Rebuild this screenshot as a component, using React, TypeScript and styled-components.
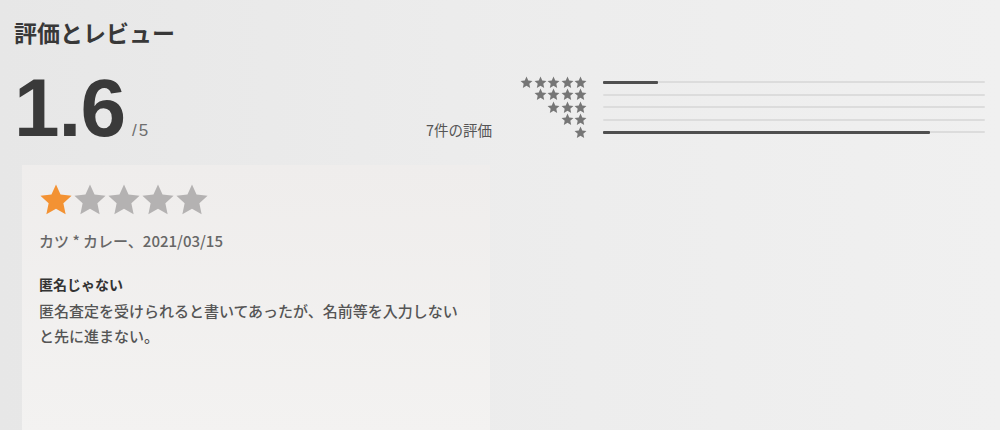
import React from 'react';
import styled, { createGlobalStyle } from 'styled-components';

const GlobalStyle = createGlobalStyle`
    html, body {
        margin: 0;
        padding: 0;
    }
    body {
        width: 1000px;
        height: 430px;
        overflow: hidden;
        background: linear-gradient(90deg, #e7e7e7 0%, #ececec 45%, #f0f0f0 100%);
        font-family: "Noto Sans CJK JP", "Noto Sans", sans-serif;
    }
`

const Page = styled.div`
    padding: 18px 0 0 14px;
    box-sizing: border-box;
    height: 430px;
`

const Heading = styled.h2`
    margin: 0;
    font-size: 23px;
    line-height: 28px;
    font-weight: 700;
    color: #383838;
`

const Summary = styled.div`
    display: flex;
    align-items: flex-start;
    margin-top: 21px;
`

const ScoreBlock = styled.div`
    display: flex;
    align-items: baseline;
    justify-content: space-between;
    width: 478px;
`

const Score = styled.div`
    display: flex;
    align-items: baseline;
    gap: 7px;
`

const BigNumber = styled.span`
    font-family: "Liberation Sans", Arial, sans-serif;
    font-weight: 700;
    font-size: 82px;
    line-height: 82px;
    letter-spacing: -1px;
    color: #3a3a3a;
`

const OutOf = styled.span`
    font-family: "Liberation Sans", Arial, sans-serif;
    font-size: 17px;
    letter-spacing: 2px;
    color: #6e6e6e;
`

const Count = styled.span`
    font-size: 14.5px;
    color: #555;
`

const Histogram = styled.div`
    display: grid;
    grid-template-columns: 67px 382px;
    column-gap: 16px;
    grid-auto-rows: 12.5px;
    align-items: center;
    margin: 9px 0 0 28px;
`

const MiniStars = styled.div`
    display: flex;
    justify-content: flex-end;
    gap: 0.5px;
`

const Track = styled.div`
    height: 2px;
    background: #dcdcdc;
    border-radius: 1px;
`

const Fill = styled.div`
    height: 2.5px;
    margin-top: -0.25px;
    background: #4f4f4f;
    border-radius: 1px;
`

const Card = styled.div`
    margin: 16px 0 0 8px;
    width: 468px;
    height: 270px;
    box-sizing: border-box;
    padding: 18px 0 0 17px;
    background: linear-gradient(180deg, #efedec 0%, #f3f2f1 100%);
`

const StarRow = styled.div`
    display: flex;
    gap: 0;
`

const Meta = styled.div`
    margin-top: 14px;
    font-size: 15px;
    line-height: 20px;
    font-weight: 500;
    color: #666;
`

const ReviewTitle = styled.div`
    margin-top: 23px;
    font-size: 14px;
    line-height: 20px;
    font-weight: 700;
    color: #333;
`

const ReviewBody = styled.p`
    margin: 4px 0 0;
    max-width: 432px;
    font-size: 15px;
    line-height: 25px;
    font-weight: 500;
    color: #555;
`

type StarProps = {
    size: number;
    color: string;
}

const Star: React.FC<StarProps> = ({ size, color }) => (
    <svg width={size} height={size} viewBox="0 0 24 24">
        <polygon
            fill={color}
            points="12,1 15.2,8.1 23,9 17.2,14.3 18.8,22 12,18.1 5.2,22 6.8,14.3 1,9 8.8,8.1"
        />
    </svg>
)

const distribution = [
    { stars: 5, ratio: 1 / 7 },
    { stars: 4, ratio: 0 },
    { stars: 3, ratio: 0 },
    { stars: 2, ratio: 0 },
    { stars: 1, ratio: 6 / 7 },
]

const App: React.FC = () => {
    return (
        <Page>
            <GlobalStyle />
            <Heading>評価とレビュー</Heading>
            <Summary>
                <ScoreBlock>
                    <Score>
                        <BigNumber>1.6</BigNumber>
                        <OutOf>/5</OutOf>
                    </Score>
                    <Count>7件の評価</Count>
                </ScoreBlock>
                <Histogram>
                    {distribution.map(row => (
                        <React.Fragment key={row.stars}>
                            <MiniStars>
                                {Array.from({ length: row.stars }).map((_, i) => (
                                    <Star key={i} size={13} color="#767676" />
                                ))}
                            </MiniStars>
                            <Track>
                                {row.ratio > 0 && <Fill style={{ width: `${row.ratio * 100}%` }} />}
                            </Track>
                        </React.Fragment>
                    ))}
                </Histogram>
            </Summary>
            <Card>
                <StarRow>
                    {[0, 1, 2, 3, 4].map(i => (
                        <Star key={i} size={34} color={i < 1 ? '#f39233' : '#b4b2b2'} />
                    ))}
                </StarRow>
                <Meta>カツ * カレー、2021/03/15</Meta>
                <ReviewTitle>匿名じゃない</ReviewTitle>
                <ReviewBody>
                    匿名査定を受けられると書いてあったが、名前等を入力しないと先に進まない。
                </ReviewBody>
            </Card>
        </Page>
    )
}

export default App;
